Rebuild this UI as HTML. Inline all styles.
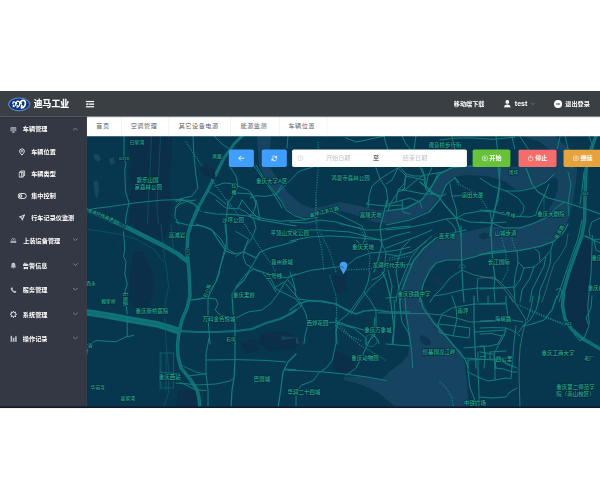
<!DOCTYPE html>
<html lang="zh-CN">
<head>
<meta charset="utf-8">
<title>迪马工业</title>
<style>
*{box-sizing:border-box;margin:0;padding:0}
html,body{width:600px;height:500px;background:#fff;overflow:hidden}
body{font-family:"Liberation Sans","Noto Sans CJK SC",sans-serif;position:relative}
#mapsvg{position:absolute;left:87px;top:136px;width:513px;height:272px;display:block}
#app{position:absolute;left:0;top:91px;width:1366px;height:722px;transform:scale(0.43924);transform-origin:0 0;overflow:hidden;color:#fff}
#header{position:absolute;left:0;top:0;width:1366px;height:58px;background:#3a3f44;z-index:5;box-shadow:0 1px 3px rgba(0,0,0,.35)}
#side{position:absolute;left:0;top:58px;width:198px;height:664px;background:#343744;z-index:4}
#tabs{position:absolute;left:198px;top:58px;width:1168px;height:45px;background:#fff;z-index:3}
#bline{position:absolute;left:0;bottom:0;width:1366px;height:4px;background:#141a2e;z-index:9}
.mi{position:absolute;left:0;width:198px;height:20px;font-size:14px;font-weight:bold;line-height:20px;color:#fff;white-space:nowrap}
.mi span{position:absolute;top:0}
.mi svg{position:absolute}
.tab{position:absolute;top:0;height:45px;line-height:45px;font-size:14px;color:#5c6066;border-right:1px solid #e2e4ea;text-align:center;letter-spacing:1.2px;text-indent:1.2px;padding-right:6.500px}
.hd{position:absolute;top:0;height:58px;line-height:58px;font-size:14px;font-weight:bold;color:#fff;white-space:nowrap}
.btn{position:absolute;top:133px;height:40px;border-radius:4px;color:#fff;font-size:14px;font-weight:bold;line-height:40px;text-align:center;white-space:nowrap}
#range{position:absolute;left:665px;top:133px;width:398px;height:40px;border-radius:4px;background:#fff;font-size:14px;line-height:40px;color:#c0c4cc}
#range span{position:absolute;top:0}
</style>
</head>
<body>
<svg id="mapsvg" viewBox="87 136 513 272" width="513" height="272" font-family="'Liberation Sans','Noto Sans CJK SC',sans-serif" font-weight="bold">
<rect x="87" y="136" width="513" height="272" fill="#07374f"/>
<path d="M257 136 L258 152 L259 166.5 L266.5 180 L275.5 193.5 L283 204 L289 211.5 L299.5 216.7 L310 217.5 L325 214.5 L342 211 L358 216 L374 222 L388 224 L400 222 L410 219 L428 211 L439 198 L446 184 L454 177 L466 175 L486 176 L498 179 L506 182 L516 190 L533 189 L547 182 L555 177 L558 181 L566 184 L568 172 L556 162 L540 166 L506 167 L470 166.4 L452 168 L440 174 L432 186 L422 200 L410 205 L398 208 L386 211 L374 210 L356 205 L340 202 L325 206 L313 208.5 L301 204 L290.5 195 L280 183 L269.5 166.5 L270 152 L271 136Z" fill="#16435f"/>
<path d="M522 136 L540 142 L550 150 L556 162 L558 181 L557.5 191 L553 202 L547 212 L537 221 L548 234 L565 230 L572 206 L575 190 L577 170 L575 155 L565 145 L555 136Z" fill="#16435f"/>
<path d="M537 221 L520 227 L487 227 L461 233 L441 237 L423 247 L411 262 L403 279 L401 299 L404 312 L408 332 L409 348 L408 356 L400 364 L389 372 L381 380 L360 376 L344 377 L344 380 L362.7 385 L378.7 393 L392 404 L397 408 L469.3 408 L468 396 L466.7 380 L465 364 L461 350 L454 346 L444 332 L434 320 L426 308 L421 296 L424 282 L430 270 L436 263 L446 260 L462 260 L474 257 L480 254.4 L500 252.4 L520 250.4 L540 246.4 L554 241 L562 234 L565 230 L548 234Z" fill="#16435f"/>
<path d="M419.3 337.5 L421.8 335 L424.3 336.25 L429.3 339.2 L431 342.5 L430.2 345.4 L426.8 345.8 L423.5 344.2 L421 341.7Z" fill="#0d3650"/>
<path d="M478 235 L484 232.5 L490 234 L489.5 238 L482 239.5Z" fill="#0d3650"/>
<path d="M428.5 276.5 L436.0 275.2 L444.8 284.0 L446.0 288.5 L439.8 289.5 L433.5 285.2Z" fill="#0d3650"/>
<path d="M127.2 136.0 L172.2 136.0 L171.5 159.0 L170.0 184.0 L171.0 206.5 L161.0 209.0 L148.5 216.5 L136.0 224.0 L129.0 224.0 L131.0 209.0 L129.8 196.5 L132.5 184.0 L128.5 171.5 L131.0 159.0 L127.2 146.5Z" fill="#0c2f49"/>
<path d="M133.5 251.5 L144.0 252.8 L153.0 274.0 L155.0 286.5 L149.0 306.5 L136.0 309.5 L128.5 299.0 L129.8 274.0 L132.0 261.5Z" fill="#0c2f49"/>
<path d="M136.0 224.0 L161.0 224.0 L166.0 239.0 L156.0 236.0 L146.0 231.5Z" fill="#0c2f49"/>
<path d="M330.5 277.0 L336.0 275.0 L340.5 276.5 L346.0 274.5 L347.5 281.5 L345.5 286.0 L349.0 291.5 L343.5 291.0 L341.0 294.5 L336.5 293.0 L335.0 286.5 L332.0 284.0Z" fill="#0d3049"/>
<path d="M178.5 390.5 L196.0 390.5 L199.0 408.0 L176.0 408.0Z" fill="#0c2f49"/>
<path d="M261.0 333.0 L286.0 331.8 L301.5 340.5 L296.0 348.5 L268.5 351.0 L258.5 343.0Z" fill="#0c2f49"/>
<path d="M281.0 336.0 L297.2 337.5 L299.8 343.0 L289.8 346.0 L282.2 341.8Z" fill="#16435f"/>
<path d="M333.5 350.5 L348.5 355.5 L356.5 368.0 L341.0 376.0 L333.0 368.0Z" fill="#0c2f49"/>
<path d="M129 196 L171 196 L170 224 L164 240 L150 238 L136 228 L130 220Z" fill="#0c2f49"/>
<path d="M583.3 238.2 L593.7 244.7 L591 272 L587.7 305.8 L589.8 324 L586 334.4 L571.6 328 L565 317.5 L563 305.8 L564.3 290.2 L569.5 272 L576 253.8 L582 238.2Z" fill="#0c2f49"/>
<path d="M93.0 154.5 L98.0 154.0 L101.0 159.0 L98.5 162.0 L94.5 160.0Z" fill="#164660"/>
<path d="M109.0 158.0 L114.0 157.5 L115.0 163.5 L110.5 164.5Z" fill="#164660"/>
<path d="M93.5 181.5 L98.0 180.5 L99.0 191.5 L97.0 199.5 L94.5 194.0Z" fill="#164660"/>
<path d="M82 208 L87 210 L104 217 L124 226 L144 236 L164 246 L178 254 L187 261" fill="none" stroke="#0f7478" stroke-width="4.2" stroke-linejoin="round" stroke-linecap="round"/>
<path d="M82 208 L87 210 L104 217 L124 226 L144 236 L164 246 L178 254 L187 261" fill="none" stroke="#0b5560" stroke-width="0.35" stroke-linejoin="round" stroke-linecap="round"/>
<path d="M82 311.7 L88 312.4 L106 315.2 L124 318.4 L142 321.8 L157 324.3 L168 327.5 L178.5 331" fill="none" stroke="#0f7478" stroke-width="6.6" stroke-linejoin="round" stroke-linecap="round"/>
<path d="M82 311.7 L88 312.4 L106 315.2 L124 318.4 L142 321.8 L157 324.3 L168 327.5 L178.5 331" fill="none" stroke="#0b5560" stroke-width="0.35" stroke-linejoin="round" stroke-linecap="round"/>
<path d="M246 132 L242 136 L234 144 L224 158 L216 174 L208 190 L198 208 L193 220" fill="none" stroke="#0f7478" stroke-width="3.0" stroke-linejoin="round" stroke-linecap="round"/>
<path d="M246 132 L242 136 L234 144 L224 158 L216 174 L208 190 L198 208 L193 220" fill="none" stroke="#0b5560" stroke-width="0.35" stroke-linejoin="round" stroke-linecap="round"/>
<path d="M198 208 L192 222 L188 234 L187 250 L188 260 L189 272 L189.6 284 L190 296 L187 308 L182 320 L179 332 L177.5 345 L178 356 L181 368 L190 379 L197 390 L199 398 L200 410" fill="none" stroke="#0f7478" stroke-width="3.4" stroke-linejoin="round" stroke-linecap="round"/>
<path d="M198 208 L192 222 L188 234 L187 250 L188 260 L189 272 L189.6 284 L190 296 L187 308 L182 320 L179 332 L177.5 345 L178 356 L181 368 L190 379 L197 390 L199 398 L200 410" fill="none" stroke="#0b5560" stroke-width="0.35" stroke-linejoin="round" stroke-linecap="round"/>
<path d="M179 331 L196 332 L216 332 L236 331 L252 329 L266 323 L280 319 L288 315 L296 310" fill="none" stroke="#0f7478" stroke-width="2.2" stroke-linejoin="round" stroke-linecap="round"/>
<path d="M179 331 L196 332 L216 332 L236 331 L252 329 L266 323 L280 319 L288 315 L296 310" fill="none" stroke="#0b5560" stroke-width="0.35" stroke-linejoin="round" stroke-linecap="round"/>
<path d="M600 120 L596 136 L590 152 L586 170 L585 195 L584.6 220 L582 235.6 L575.5 253.8 L569 272 L563.8 290.2 L562.5 305.8 L565 318.8 L571.6 329.2 L582 338.3 L597.6 347.4 L610 354" fill="none" stroke="#0f7478" stroke-width="3.4" stroke-linejoin="round" stroke-linecap="round"/>
<path d="M600 120 L596 136 L590 152 L586 170 L585 195 L584.6 220 L582 235.6 L575.5 253.8 L569 272 L563.8 290.2 L562.5 305.8 L565 318.8 L571.6 329.2 L582 338.3 L597.6 347.4 L610 354" fill="none" stroke="#0b5560" stroke-width="0.35" stroke-linejoin="round" stroke-linecap="round"/>
<path d="M124.0 136.0 L124.0 159.0 L126.0 164.0 L124.8 169.0 L125.5 191.5 L129.0 202.8 L126.0 216.5 L125.5 224.0" fill="none" stroke="#117e7e" stroke-width="1.0" stroke-linejoin="round" stroke-linecap="round"/>
<path d="M151.5 136.0 L150.0 171.5 L148.5 196.5 L147.5 224.0" fill="none" stroke="#0f686e" stroke-width="0.5" stroke-linejoin="round" stroke-linecap="round"/>
<path d="M160.5 136.0 L158.8 171.5 L157.0 206.5 L158.5 224.0" fill="none" stroke="#0f686e" stroke-width="0.5" stroke-linejoin="round" stroke-linecap="round"/>
<path d="M86.0 209.5 L111.0 206.5 L136.0 202.8 L161.0 200.2 L182.2 199.5" fill="none" stroke="#117e7e" stroke-width="1.0" stroke-linejoin="round" stroke-linecap="round"/>
<path d="M182.2 199.5 L176.0 206.5 L174.8 216.5 L178.5 224.0" fill="none" stroke="#117e7e" stroke-width="1.0" stroke-linejoin="round" stroke-linecap="round"/>
<path d="M182.2 199.5 L193.5 204.0 L201.0 211.5" fill="none" stroke="#117e7e" stroke-width="1.0" stroke-linejoin="round" stroke-linecap="round"/>
<path d="M123.5 231.5 L124.8 249.0 L123.5 256.5 L126.0 261.5 L124.8 274.0 L127.2 284.0 L123.5 296.5 L126.0 304.0 L127.2 314.0" fill="none" stroke="#117e7e" stroke-width="1.0" stroke-linejoin="round" stroke-linecap="round"/>
<path d="M161.0 224.0 L163.5 249.0 L167.2 274.0 L168.5 286.5 L166.0 299.0 L163.5 314.0" fill="none" stroke="#0f686e" stroke-width="0.5" stroke-linejoin="round" stroke-linecap="round"/>
<path d="M171.0 224.0 L172.2 239.0 L174.0 251.5" fill="none" stroke="#0f686e" stroke-width="0.5" stroke-linejoin="round" stroke-linecap="round"/>
<path d="M86.0 229.0 L118.5 234.0 L136.0 239.0 L153.5 249.0 L163.5 261.5" fill="none" stroke="#0f686e" stroke-width="0.5" stroke-linejoin="round" stroke-linecap="round"/>
<path d="M196.0 224.0 L211.0 229.0 L221.0 239.0 L226.0 249.0 L221.0 264.0 L216.0 281.5 L208.5 296.5 L193.5 300.2" fill="none" stroke="#117e7e" stroke-width="1.0" stroke-linejoin="round" stroke-linecap="round"/>
<path d="M226.0 224.0 L227.2 249.0 L236.0 254.0" fill="none" stroke="#117e7e" stroke-width="1.0" stroke-linejoin="round" stroke-linecap="round"/>
<path d="M268.5 274.0 L276.0 289.0 L296.0 299.0 L301.0 306.5 L291.0 314.0" fill="none" stroke="#117e7e" stroke-width="1.0" stroke-linejoin="round" stroke-linecap="round"/>
<path d="M286.0 284.0 L298.5 299.0 L318.5 301.5 L336.0 304.0 L356.0 314.0" fill="none" stroke="#117e7e" stroke-width="1.0" stroke-linejoin="round" stroke-linecap="round"/>
<path d="M386.0 274.0 L371.0 286.5 L361.0 299.0 L351.0 314.0" fill="none" stroke="#117e7e" stroke-width="1.0" stroke-linejoin="round" stroke-linecap="round"/>
<path d="M236.0 231.5 L248.5 239.0 L243.5 251.5 L236.0 256.5" fill="none" stroke="#117e7e" stroke-width="1.0" stroke-linejoin="round" stroke-linecap="round"/>
<path d="M164.8 318.0 L166.0 343.0 L168.5 368.0 L168.5 393.0 L163.5 408.0" fill="none" stroke="#0f686e" stroke-width="0.5" stroke-linejoin="round" stroke-linecap="round"/>
<path d="M161.0 353.0 L173.5 353.0 L173.5 388.0 L161.0 388.0 L161.0 353.0" fill="none" stroke="#117e7e" stroke-width="0.5" stroke-linejoin="round" stroke-linecap="round"/>
<path d="M86.0 358.0 L88.5 345.5 L96.0 340.5 L116.0 341.8 L126.0 336.8 L133.5 335.5" fill="none" stroke="#117e7e" stroke-width="1.0" stroke-linejoin="round" stroke-linecap="round"/>
<path d="M127.2 318.0 L127.2 335.5" fill="none" stroke="#117e7e" stroke-width="1.0" stroke-linejoin="round" stroke-linecap="round"/>
<path d="M336.0 318.0 L336.0 343.0 L332.2 360.5 L326.0 368.0 L318.5 373.0 L313.5 380.5 L301.0 385.5 L296.0 393.0 L296.0 408.0" fill="none" stroke="#117e7e" stroke-width="1.0" stroke-linejoin="round" stroke-linecap="round"/>
<path d="M284.8 370.0 L321.0 371.8 L346.0 374.2 L366.0 376.8 L386.0 380.5" fill="none" stroke="#117e7e" stroke-width="1.0" stroke-linejoin="round" stroke-linecap="round"/>
<path d="M336.0 323.0 L353.5 328.0 L366.0 338.0 L366.0 345.5" fill="none" stroke="#117e7e" stroke-width="1.0" stroke-linejoin="round" stroke-linecap="round"/>
<path d="M374.8 318.0 L373.5 333.0 L366.0 348.0 L356.0 368.0 L346.0 375.5" fill="none" stroke="#117e7e" stroke-width="1.0" stroke-linejoin="round" stroke-linecap="round"/>
<path d="M336.0 325.5 L361.0 345.5 L386.0 360.5" fill="none" stroke="#12868a" stroke-width="1.3" stroke-linejoin="round" stroke-linecap="round" stroke-dasharray="0.01 2.5"/>
<circle cx="371.0" cy="340.5" r="6" fill="none" stroke="#117e7e" stroke-width="0.7"/>
<path d="M386.0 211.0 L406.0 208.4 L422.0 199.6 L432.0 185.6 L440.0 173.6 L452.0 167.6 L470.0 166.0 L506.0 166.4" fill="none" stroke="#117e7e" stroke-width="1.2" stroke-linejoin="round" stroke-linecap="round"/>
<path d="M386.0 225.0 L410.0 220.0 L429.0 212.0 L440.0 199.0 L446.0 185.0 L455.0 177.6 L459.0 183.0" fill="none" stroke="#117e7e" stroke-width="1.2" stroke-linejoin="round" stroke-linecap="round"/>
<path d="M420.0 182.0 L432.0 192.0 L439.0 197.0 L444.0 204.0 L456.0 218.0 L460.0 230.0 L461.0 236.0" fill="none" stroke="#117e7e" stroke-width="1.2" stroke-linejoin="round" stroke-linecap="round"/>
<path d="M398.0 168.0 L406.0 176.0 L404.0 190.0 L398.0 192.0 L390.0 204.0 L388.0 211.0" fill="none" stroke="#117e7e" stroke-width="1.0" stroke-linejoin="round" stroke-linecap="round"/>
<path d="M404.0 190.0 L424.0 194.0 L435.0 194.0" fill="none" stroke="#117e7e" stroke-width="1.0" stroke-linejoin="round" stroke-linecap="round"/>
<path d="M406.0 176.0 L424.0 180.0 L426.0 190.0 L435.0 194.0" fill="none" stroke="#117e7e" stroke-width="1.0" stroke-linejoin="round" stroke-linecap="round"/>
<path d="M422.0 168.0 L426.0 180.0" fill="none" stroke="#117e7e" stroke-width="1.0" stroke-linejoin="round" stroke-linecap="round"/>
<path d="M386.0 184.0 L392.0 180.0 L398.0 168.0" fill="none" stroke="#117e7e" stroke-width="1.0" stroke-linejoin="round" stroke-linecap="round"/>
<path d="M450.0 184.0 L452.0 196.0 L456.0 208.0 L457.0 218.0 L464.0 214.0 L480.0 211.0 L494.0 212.0 L506.0 215.0" fill="none" stroke="#117e7e" stroke-width="1.0" stroke-linejoin="round" stroke-linecap="round"/>
<path d="M452.0 196.0 L462.0 195.6" fill="none" stroke="#117e7e" stroke-width="1.0" stroke-linejoin="round" stroke-linecap="round"/>
<path d="M455.0 177.6 L458.0 184.0 L470.0 190.0 L482.0 200.0 L488.0 210.0" fill="none" stroke="#12868a" stroke-width="1.3" stroke-linejoin="round" stroke-linecap="round" stroke-dasharray="0.01 2.5"/>
<path d="M386.0 230.0 L406.0 228.0 L426.0 224.0 L446.0 219.0 L457.0 218.0" fill="none" stroke="#117e7e" stroke-width="1.0" stroke-linejoin="round" stroke-linecap="round"/>
<path d="M446.0 219.0 L452.0 224.0 L456.0 230.0 L454.0 236.0" fill="none" stroke="#117e7e" stroke-width="1.0" stroke-linejoin="round" stroke-linecap="round"/>
<path d="M457.0 218.0 L470.0 222.0 L490.0 223.0 L506.0 222.0" fill="none" stroke="#117e7e" stroke-width="1.0" stroke-linejoin="round" stroke-linecap="round"/>
<path d="M490.0 212.0 L492.0 224.0 L490.0 236.0" fill="none" stroke="#117e7e" stroke-width="1.0" stroke-linejoin="round" stroke-linecap="round"/>
<path d="M498.0 168.0 L500.0 184.0 L498.0 200.0 L494.0 212.0" fill="none" stroke="#117e7e" stroke-width="1.0" stroke-linejoin="round" stroke-linecap="round"/>
<path d="M500.0 168.0 L499.0 188.0 L496.0 204.0 L492.0 222.0 L490.0 236.0" fill="none" stroke="#117e7e" stroke-width="1.2" stroke-linejoin="round" stroke-linecap="round"/>
<path d="M480.0 178.0 L492.0 186.0 L506.0 191.0 L520.0 191.0 L534.0 188.0 L546.0 182.0 L554.0 174.0" fill="none" stroke="#117e7e" stroke-width="1.0" stroke-linejoin="round" stroke-linecap="round"/>
<path d="M506.0 191.0 L518.0 198.0 L524.0 206.0 L523.0 212.0 L520.0 216.0" fill="none" stroke="#117e7e" stroke-width="1.0" stroke-linejoin="round" stroke-linecap="round"/>
<path d="M526.0 168.0 L532.0 184.0 L538.0 192.0 L548.0 198.0 L564.0 202.0 L580.0 207.0 L592.0 211.0 L600.0 214.0" fill="none" stroke="#117e7e" stroke-width="1.2" stroke-linejoin="round" stroke-linecap="round"/>
<path d="M549.0 184.0 L544.0 196.0 L538.0 208.0 L536.0 214.0" fill="none" stroke="#117e7e" stroke-width="1.0" stroke-linejoin="round" stroke-linecap="round"/>
<path d="M480.0 210.0 L494.0 211.0 L510.0 216.0 L530.0 217.0 L536.0 215.0" fill="none" stroke="#117e7e" stroke-width="1.0" stroke-linejoin="round" stroke-linecap="round"/>
<path d="M544.0 198.0 L544.0 214.0" fill="none" stroke="#12868a" stroke-width="1.3" stroke-linejoin="round" stroke-linecap="round" stroke-dasharray="0.01 2.5"/>
<path d="M480.0 222.0 L492.0 223.0 L504.0 228.0 L520.0 228.0 L532.0 224.0 L546.0 218.0 L556.0 208.0 L564.0 202.0" fill="none" stroke="#117e7e" stroke-width="1.0" stroke-linejoin="round" stroke-linecap="round"/>
<path d="M584.0 172.0 L582.0 190.0 L580.0 204.0" fill="none" stroke="#117e7e" stroke-width="1.0" stroke-linejoin="round" stroke-linecap="round"/>
<path d="M568.0 172.0 L571.0 184.0 L568.0 204.0 L569.0 216.0" fill="none" stroke="#117e7e" stroke-width="1.0" stroke-linejoin="round" stroke-linecap="round"/>
<path d="M600.0 218.0 L592.0 222.0 L589.0 230.0 L590.0 236.0" fill="none" stroke="#117e7e" stroke-width="1.0" stroke-linejoin="round" stroke-linecap="round"/>
<path d="M461.0 226.0 L461.0 230.0 L461.6 260.0 L462.0 270.0 L463.0 290.0 L464.0 302.0" fill="none" stroke="#117e7e" stroke-width="1.2" stroke-linejoin="round" stroke-linecap="round"/>
<ellipse cx="462.2" cy="266.4" rx="3.4" ry="1.8" fill="none" stroke="#117e7e" stroke-width="0.6"/>
<path d="M491.0 226.0 L491.0 230.0 L492.0 252.0 L494.0 270.0 L495.0 278.0" fill="none" stroke="#117e7e" stroke-width="1.2" stroke-linejoin="round" stroke-linecap="round"/>
<path d="M462.0 270.0 L474.0 275.0 L490.0 278.0 L498.0 280.0 L506.0 288.0 L514.0 298.0" fill="none" stroke="#3d7f78" stroke-width="0.7" stroke-linejoin="round" stroke-linecap="round"/>
<path d="M506.0 250.0 L490.0 252.0 L474.0 257.0 L462.0 260.0 L446.0 260.0 L436.0 263.0 L430.0 270.0 L424.0 282.0 L420.0 296.0 L420.0 302.0" fill="none" stroke="#117e7e" stroke-width="1.2" stroke-linejoin="round" stroke-linecap="round"/>
<path d="M466.0 230.0 L452.0 233.0 L436.0 238.0 L424.0 248.0 L414.0 260.0 L408.0 274.0 L402.0 290.0 L400.0 302.0" fill="none" stroke="#117e7e" stroke-width="1.2" stroke-linejoin="round" stroke-linecap="round"/>
<path d="M432.0 236.0 L420.0 246.0 L411.0 258.0 L405.0 272.0 L398.0 290.0 L396.0 302.0" fill="none" stroke="#117e7e" stroke-width="1.0" stroke-linejoin="round" stroke-linecap="round"/>
<path d="M386.0 248.0 L402.0 242.0 L418.0 236.0 L432.0 230.0" fill="none" stroke="#117e7e" stroke-width="1.0" stroke-linejoin="round" stroke-linecap="round"/>
<path d="M386.0 254.0 L398.0 256.0 L412.0 252.0 L426.0 242.0" fill="none" stroke="#117e7e" stroke-width="1.0" stroke-linejoin="round" stroke-linecap="round"/>
<path d="M386.0 266.0 L398.0 265.0 L412.0 264.0" fill="none" stroke="#117e7e" stroke-width="1.0" stroke-linejoin="round" stroke-linecap="round"/>
<path d="M390.0 258.0 L412.0 252.0" fill="none" stroke="#12868a" stroke-width="1.3" stroke-linejoin="round" stroke-linecap="round" stroke-dasharray="0.01 2.5"/>
<path d="M462.0 270.0 L450.0 278.0 L442.0 288.0 L434.0 296.0 L430.0 302.0" fill="none" stroke="#117e7e" stroke-width="1.0" stroke-linejoin="round" stroke-linecap="round"/>
<path d="M434.0 296.0 L446.0 294.0 L462.0 290.0 L478.0 288.0 L506.0 288.0" fill="none" stroke="#117e7e" stroke-width="1.0" stroke-linejoin="round" stroke-linecap="round"/>
<path d="M478.0 278.0 L477.0 288.0 L478.0 302.0" fill="none" stroke="#117e7e" stroke-width="1.0" stroke-linejoin="round" stroke-linecap="round"/>
<path d="M495.0 278.0 L494.0 288.0 L495.0 302.0" fill="none" stroke="#117e7e" stroke-width="1.0" stroke-linejoin="round" stroke-linecap="round"/>
<path d="M388.0 270.0 L392.0 286.0 L390.0 302.0" fill="none" stroke="#117e7e" stroke-width="1.0" stroke-linejoin="round" stroke-linecap="round"/>
<path d="M480.0 254.4 L500.0 252.4 L520.0 250.4 L540.0 246.4 L554.0 241.4 L562.0 234.4 L565.0 230.0 L568.0 224.0" fill="none" stroke="#117e7e" stroke-width="1.2" stroke-linejoin="round" stroke-linecap="round"/>
<path d="M480.0 278.0 L494.0 277.0 L500.0 284.0 L508.0 294.0 L513.0 302.0" fill="none" stroke="#3d7f78" stroke-width="0.7" stroke-linejoin="round" stroke-linecap="round"/>
<path d="M517.0 251.0 L518.0 262.0 L515.0 276.0 L514.0 288.0 L515.0 302.0" fill="none" stroke="#117e7e" stroke-width="1.0" stroke-linejoin="round" stroke-linecap="round"/>
<path d="M518.0 262.0 L524.0 268.0 L534.0 267.0 L540.0 262.0 L539.0 252.0 L535.0 249.0" fill="none" stroke="#117e7e" stroke-width="1.0" stroke-linejoin="round" stroke-linecap="round"/>
<path d="M540.0 262.0 L546.0 256.0 L551.0 250.0 L553.0 242.0" fill="none" stroke="#117e7e" stroke-width="1.0" stroke-linejoin="round" stroke-linecap="round"/>
<path d="M546.0 256.0 L544.0 266.0 L538.0 278.0 L532.0 290.0 L530.0 302.0" fill="none" stroke="#117e7e" stroke-width="1.0" stroke-linejoin="round" stroke-linecap="round"/>
<path d="M551.0 252.0 L550.0 264.0 L546.0 276.0 L540.0 290.0 L538.0 302.0" fill="none" stroke="#117e7e" stroke-width="1.0" stroke-linejoin="round" stroke-linecap="round"/>
<path d="M568.0 234.0 L566.0 246.0 L560.0 256.0 L554.0 264.0 L550.0 276.0 L546.0 290.0 L542.0 302.0" fill="none" stroke="#3d7f78" stroke-width="0.6" stroke-linejoin="round" stroke-linecap="round"/>
<path d="M480.0 289.0 L500.0 288.0 L514.0 287.0" fill="none" stroke="#117e7e" stroke-width="1.0" stroke-linejoin="round" stroke-linecap="round"/>
<path d="M524.0 268.0 L520.0 280.0 L514.0 288.0" fill="none" stroke="#117e7e" stroke-width="1.0" stroke-linejoin="round" stroke-linecap="round"/>
<path d="M534.0 267.0 L530.0 278.0 L522.0 290.0 L520.0 302.0" fill="none" stroke="#117e7e" stroke-width="1.0" stroke-linejoin="round" stroke-linecap="round"/>
<path d="M502.0 238.0 L506.0 254.0 L508.0 270.0 L502.0 282.0" fill="none" stroke="#12868a" stroke-width="1.3" stroke-linejoin="round" stroke-linecap="round" stroke-dasharray="0.01 2.5"/>
<path d="M512.0 238.0 L516.0 252.0" fill="none" stroke="#12868a" stroke-width="1.3" stroke-linejoin="round" stroke-linecap="round" stroke-dasharray="0.01 2.5"/>
<path d="M586.0 236.0 L594.0 240.0 L600.0 239.0" fill="none" stroke="#117e7e" stroke-width="1.0" stroke-linejoin="round" stroke-linecap="round"/>
<path d="M594.0 240.0 L596.0 250.0 L600.0 252.0" fill="none" stroke="#117e7e" stroke-width="1.0" stroke-linejoin="round" stroke-linecap="round"/>
<path d="M556.0 290.0 L560.0 288.0 L562.0 292.0 L559.0 302.0" fill="none" stroke="#117e7e" stroke-width="1.0" stroke-linejoin="round" stroke-linecap="round"/>
<path d="M378.0 312.8 L386.0 313.0 L406.0 313.6 L426.0 313.6 L442.0 315.0 L456.0 318.0 L470.0 322.0 L486.0 321.6 L506.0 320.0" fill="none" stroke="#2f8078" stroke-width="0.8" stroke-linejoin="round" stroke-linecap="round"/>
<path d="M405.0 296.0 L406.0 312.0 L409.0 332.0 L411.6 350.0 L412.6 368.0" fill="none" stroke="#117e7e" stroke-width="1.0" stroke-linejoin="round" stroke-linecap="round"/>
<path d="M394.0 300.0 L395.0 313.0 L394.0 328.0 L392.0 344.0" fill="none" stroke="#117e7e" stroke-width="1.0" stroke-linejoin="round" stroke-linecap="round"/>
<path d="M400.0 302.0 L401.0 313.0" fill="none" stroke="#117e7e" stroke-width="1.0" stroke-linejoin="round" stroke-linecap="round"/>
<path d="M386.0 344.0 L398.0 345.0 L410.0 346.0" fill="none" stroke="#117e7e" stroke-width="1.0" stroke-linejoin="round" stroke-linecap="round"/>
<path d="M420.0 296.0 L423.0 308.0 L433.0 322.0 L444.0 334.0 L455.0 347.0 L465.0 359.0 L468.4 368.0" fill="none" stroke="#117e7e" stroke-width="1.2" stroke-linejoin="round" stroke-linecap="round"/>
<path d="M452.0 296.0 L456.0 308.0 L457.0 318.0 L455.0 328.0 L453.0 336.0" fill="none" stroke="#117e7e" stroke-width="1.0" stroke-linejoin="round" stroke-linecap="round"/>
<path d="M438.0 324.0 L442.0 314.0 L452.0 308.0 L474.0 304.0 L506.0 304.0" fill="none" stroke="#117e7e" stroke-width="1.0" stroke-linejoin="round" stroke-linecap="round"/>
<path d="M474.0 296.0 L474.0 304.0 L474.0 322.0 L475.0 346.0 L476.0 368.0" fill="none" stroke="#117e7e" stroke-width="1.2" stroke-linejoin="round" stroke-linecap="round"/>
<path d="M439.0 324.0 L456.0 326.0 L470.0 328.0 L469.0 338.0 L454.0 336.0 L440.0 333.0 L438.0 324.0" fill="none" stroke="#117e7e" stroke-width="1.0" stroke-linejoin="round" stroke-linecap="round"/>
<path d="M488.0 296.0 L488.0 304.0" fill="none" stroke="#117e7e" stroke-width="1.0" stroke-linejoin="round" stroke-linecap="round"/>
<path d="M475.0 332.0 L490.0 331.0 L506.0 330.0" fill="none" stroke="#117e7e" stroke-width="1.0" stroke-linejoin="round" stroke-linecap="round"/>
<path d="M464.0 348.0 L476.0 347.0 L490.0 346.0 L498.0 344.0 L502.0 336.0 L506.0 332.0" fill="none" stroke="#117e7e" stroke-width="1.0" stroke-linejoin="round" stroke-linecap="round"/>
<path d="M484.0 346.0 L485.0 358.0 L484.0 368.0" fill="none" stroke="#117e7e" stroke-width="1.0" stroke-linejoin="round" stroke-linecap="round"/>
<path d="M490.0 352.0 L506.0 351.0" fill="none" stroke="#117e7e" stroke-width="1.0" stroke-linejoin="round" stroke-linecap="round"/>
<path d="M466.0 358.0 L478.0 359.0 L494.0 360.0" fill="none" stroke="#117e7e" stroke-width="1.0" stroke-linejoin="round" stroke-linecap="round"/>
<path d="M494.0 356.0 L495.0 368.0" fill="none" stroke="#117e7e" stroke-width="1.0" stroke-linejoin="round" stroke-linecap="round"/>
<path d="M386.0 298.0 L398.0 297.0 L404.0 296.0" fill="none" stroke="#117e7e" stroke-width="1.0" stroke-linejoin="round" stroke-linecap="round"/>
<path d="M480.0 304.0 L496.0 303.6 L506.0 303.0 L508.0 316.0 L507.0 322.0" fill="none" stroke="#117e7e" stroke-width="1.0" stroke-linejoin="round" stroke-linecap="round"/>
<path d="M510.0 296.0 L520.0 310.0 L526.0 320.0 L523.0 332.0 L520.0 348.0 L519.0 368.0 L519.2 380.0 L520.0 408.0" fill="none" stroke="#2f8078" stroke-width="0.8" stroke-linejoin="round" stroke-linecap="round"/>
<path d="M480.0 321.0 L494.0 320.4 L512.0 320.0 L523.0 322.0" fill="none" stroke="#117e7e" stroke-width="1.0" stroke-linejoin="round" stroke-linecap="round"/>
<path d="M533.0 296.0 L531.0 308.0 L527.0 320.0" fill="none" stroke="#117e7e" stroke-width="1.0" stroke-linejoin="round" stroke-linecap="round"/>
<path d="M540.0 296.0 L536.0 310.0 L530.0 320.0 L523.0 326.0 L519.0 332.0" fill="none" stroke="#117e7e" stroke-width="1.0" stroke-linejoin="round" stroke-linecap="round"/>
<path d="M557.0 296.0 L552.0 310.0 L544.0 320.0 L532.0 324.0 L523.0 326.0" fill="none" stroke="#117e7e" stroke-width="1.2" stroke-linejoin="round" stroke-linecap="round"/>
<path d="M516.0 304.0 L540.0 314.0 L566.0 326.0" fill="none" stroke="#12868a" stroke-width="1.3" stroke-linejoin="round" stroke-linecap="round" stroke-dasharray="0.01 2.5"/>
<path d="M480.0 328.0 L492.0 327.6 L506.0 328.0 L516.0 332.0 L520.0 336.0" fill="none" stroke="#117e7e" stroke-width="1.0" stroke-linejoin="round" stroke-linecap="round"/>
<path d="M506.0 328.0 L504.0 336.0 L498.0 346.0 L494.0 354.0 L496.0 368.0" fill="none" stroke="#117e7e" stroke-width="1.0" stroke-linejoin="round" stroke-linecap="round"/>
<path d="M480.0 334.0 L492.0 333.6 L502.0 336.0" fill="none" stroke="#117e7e" stroke-width="1.0" stroke-linejoin="round" stroke-linecap="round"/>
<path d="M516.0 326.0 L514.0 342.0 L513.0 356.0 L512.0 368.0" fill="none" stroke="#117e7e" stroke-width="1.0" stroke-linejoin="round" stroke-linecap="round"/>
<path d="M480.0 346.0 L484.0 346.0 L485.0 356.0 L480.0 357.0" fill="none" stroke="#117e7e" stroke-width="1.0" stroke-linejoin="round" stroke-linecap="round"/>
<path d="M480.0 352.0 L492.0 354.0 L494.0 354.0" fill="none" stroke="#117e7e" stroke-width="1.0" stroke-linejoin="round" stroke-linecap="round"/>
<path d="M592.0 296.0 L591.0 308.0 L586.0 318.0 L589.0 326.0 L584.0 338.0 L580.0 341.0 L574.0 334.0" fill="none" stroke="#117e7e" stroke-width="1.0" stroke-linejoin="round" stroke-linecap="round"/>
<path d="M506.0 296.0 L506.0 303.0" fill="none" stroke="#117e7e" stroke-width="1.0" stroke-linejoin="round" stroke-linecap="round"/>
<path d="M193.0 136.0 L194.0 156.0 L196.0 176.0 L198.0 188.0 L192.0 196.0 L176.0 200.0" fill="none" stroke="#117e7e" stroke-width="1.0" stroke-linejoin="round" stroke-linecap="round"/>
<path d="M186.0 142.0 L202.0 166.0 L216.0 186.0 L228.0 202.0" fill="none" stroke="#12868a" stroke-width="1.3" stroke-linejoin="round" stroke-linecap="round" stroke-dasharray="0.01 2.5"/>
<path d="M214.0 136.0 L218.0 140.0 L222.0 144.0 L228.0 148.0" fill="none" stroke="#117e7e" stroke-width="1.0" stroke-linejoin="round" stroke-linecap="round"/>
<path d="M230.0 167.0 L236.0 176.0 L238.0 186.0 L234.0 194.0 L228.0 204.0 L230.0 208.0" fill="none" stroke="#117e7e" stroke-width="1.0" stroke-linejoin="round" stroke-linecap="round"/>
<path d="M215.0 186.0 L224.0 183.0 L236.0 184.0 L238.0 186.0" fill="none" stroke="#117e7e" stroke-width="1.0" stroke-linejoin="round" stroke-linecap="round"/>
<path d="M208.0 191.0 L216.0 196.0 L226.0 204.0" fill="none" stroke="#117e7e" stroke-width="1.0" stroke-linejoin="round" stroke-linecap="round"/>
<path d="M236.0 193.0 L252.0 194.0 L256.0 202.0 L255.0 208.0" fill="none" stroke="#117e7e" stroke-width="1.0" stroke-linejoin="round" stroke-linecap="round"/>
<path d="M238.0 186.0 L248.0 190.0 L252.0 194.0" fill="none" stroke="#117e7e" stroke-width="1.0" stroke-linejoin="round" stroke-linecap="round"/>
<path d="M176.0 201.0 L188.0 200.0 L196.0 205.0 L198.0 208.0" fill="none" stroke="#117e7e" stroke-width="1.0" stroke-linejoin="round" stroke-linecap="round"/>
<path d="M254.0 166.0 L264.0 180.0 L274.0 194.0 L282.0 208.0" fill="none" stroke="#117e7e" stroke-width="1.0" stroke-linejoin="round" stroke-linecap="round"/>
<path d="M284.0 182.0 L276.0 194.0 L274.0 196.0" fill="none" stroke="#117e7e" stroke-width="1.0" stroke-linejoin="round" stroke-linecap="round"/>
<path d="M288.0 136.0 L287.0 148.0" fill="none" stroke="#117e7e" stroke-width="1.0" stroke-linejoin="round" stroke-linecap="round"/>
<path d="M200.0 166.0 L214.0 168.0 L216.0 180.0 L204.0 176.0Z" fill="#0c2f49"/>
<path d="M176.0 208.0 L180.0 204.0 L188.0 201.0 L196.0 200.0" fill="none" stroke="#117e7e" stroke-width="1.0" stroke-linejoin="round" stroke-linecap="round"/>
<path d="M176.0 222.0 L188.0 225.0 L202.0 226.0 L212.0 230.0 L218.0 240.0 L226.0 251.0 L234.0 254.0 L244.0 252.0 L256.0 258.0 L260.0 252.0 L270.0 248.0 L282.0 245.0 L296.0 241.0" fill="none" stroke="#117e7e" stroke-width="1.2" stroke-linejoin="round" stroke-linecap="round"/>
<path d="M204.0 212.0 L216.0 214.0 L232.0 214.4 L248.0 216.0 L260.0 220.0 L272.0 222.0 L296.0 226.0" fill="none" stroke="#117e7e" stroke-width="1.2" stroke-linejoin="round" stroke-linecap="round"/>
<path d="M228.0 200.0 L227.0 212.0 L225.0 226.0 L227.0 240.0 L224.0 252.0 L221.0 264.0 L219.0 272.0" fill="none" stroke="#117e7e" stroke-width="1.0" stroke-linejoin="round" stroke-linecap="round"/>
<path d="M238.0 208.0 L246.0 212.0 L254.0 220.0 L256.0 228.0 L252.0 238.0 L246.0 246.0 L243.0 256.0 L246.0 264.0 L252.0 268.0 L260.0 272.0" fill="none" stroke="#117e7e" stroke-width="1.0" stroke-linejoin="round" stroke-linecap="round"/>
<path d="M216.0 200.0 L226.0 208.0 L238.0 209.0 L242.0 200.0" fill="none" stroke="#117e7e" stroke-width="1.0" stroke-linejoin="round" stroke-linecap="round"/>
<path d="M260.0 252.0 L252.0 266.0 L248.0 272.0" fill="none" stroke="#117e7e" stroke-width="1.0" stroke-linejoin="round" stroke-linecap="round"/>
<path d="M230.0 204.0 L246.0 226.0 L260.0 248.0 L270.0 262.0 L276.0 272.0" fill="none" stroke="#12868a" stroke-width="1.3" stroke-linejoin="round" stroke-linecap="round" stroke-dasharray="0.01 2.5"/>
<path d="M242.0 200.0 L250.0 210.0 L260.0 220.0" fill="none" stroke="#117e7e" stroke-width="1.0" stroke-linejoin="round" stroke-linecap="round"/>
<path d="M256.0 200.0 L258.0 208.0 L260.0 220.0" fill="none" stroke="#117e7e" stroke-width="1.0" stroke-linejoin="round" stroke-linecap="round"/>
<path d="M256.0 165.0 L265.0 180.0 L276.2 194.2 L282.2 202.5 L286.0 210.0 L295.0 216.0 L305.5 219.0 L317.5 217.5" fill="none" stroke="#117e7e" stroke-width="1.0" stroke-linejoin="round" stroke-linecap="round"/>
<path d="M314.5 166.5 L310.0 168.0 L299.5 171.0 L287.5 183.0 L276.2 194.2 L265.0 196.5 L256.0 195.7 L250.0 198.0" fill="none" stroke="#117e7e" stroke-width="1.0" stroke-linejoin="round" stroke-linecap="round"/>
<path d="M250.0 193.5 L254.5 199.5 L256.0 205.5 L253.0 213.0 L250.0 216.0" fill="none" stroke="#117e7e" stroke-width="1.0" stroke-linejoin="round" stroke-linecap="round"/>
<path d="M250.0 214.5 L265.0 219.0 L280.0 221.2 L295.0 220.5 L307.0 219.7" fill="none" stroke="#117e7e" stroke-width="1.0" stroke-linejoin="round" stroke-linecap="round"/>
<path d="M318.2 142.5 L318.2 168.0 L316.0 195.0 L316.0 225.0" fill="none" stroke="#12868a" stroke-width="1.3" stroke-linejoin="round" stroke-linecap="round" stroke-dasharray="0.01 2.5"/>
<path d="M316.0 200.0 L317.0 230.0 L322.0 250.0 L324.0 272.0" fill="none" stroke="#12868a" stroke-width="1.3" stroke-linejoin="round" stroke-linecap="round" stroke-dasharray="0.01 2.5"/>
<path d="M320.0 232.0 L330.0 252.0 L336.0 272.0" fill="none" stroke="#12868a" stroke-width="1.3" stroke-linejoin="round" stroke-linecap="round" stroke-dasharray="0.01 2.5"/>
<path d="M290.0 222.0 L306.0 223.0 L320.0 220.0 L336.0 222.0 L350.0 226.0 L366.0 230.0 L378.0 230.0 L390.0 228.0 L410.0 226.0" fill="none" stroke="#117e7e" stroke-width="1.0" stroke-linejoin="round" stroke-linecap="round"/>
<path d="M290.0 241.0 L310.0 237.0 L330.0 236.0 L350.0 237.0 L370.0 239.0 L384.0 240.0 L394.0 236.0 L410.0 232.0" fill="none" stroke="#117e7e" stroke-width="1.0" stroke-linejoin="round" stroke-linecap="round"/>
<path d="M332.0 211.0 L350.0 220.0 L362.0 226.0 L366.0 236.0 L362.0 246.0 L356.0 240.0" fill="none" stroke="#117e7e" stroke-width="1.0" stroke-linejoin="round" stroke-linecap="round"/>
<path d="M290.0 230.0 L320.0 230.0 L350.0 232.0 L380.0 240.0 L386.0 252.0 L384.0 272.0" fill="none" stroke="#117e7e" stroke-width="1.0" stroke-linejoin="round" stroke-linecap="round"/>
<path d="M387.0 200.0 L384.0 212.0 L380.0 228.0 L382.0 244.0 L378.0 260.0 L374.0 272.0" fill="none" stroke="#117e7e" stroke-width="1.2" stroke-linejoin="round" stroke-linecap="round"/>
<path d="M402.0 200.0 L403.0 212.0 L410.0 214.0" fill="none" stroke="#117e7e" stroke-width="1.0" stroke-linejoin="round" stroke-linecap="round"/>
<path d="M344.0 268.0 L356.0 258.0 L370.0 253.0 L384.0 252.0 L398.0 250.0 L410.0 247.0" fill="none" stroke="#117e7e" stroke-width="1.0" stroke-linejoin="round" stroke-linecap="round"/>
<path d="M340.0 224.0 L360.0 228.0 L366.0 240.0 L370.0 258.0 L369.0 272.0" fill="none" stroke="#12868a" stroke-width="1.3" stroke-linejoin="round" stroke-linecap="round" stroke-dasharray="0.01 2.5"/>
<path d="M344.0 270.0 L370.0 269.0 L390.0 260.0 L410.0 256.0" fill="none" stroke="#12868a" stroke-width="1.3" stroke-linejoin="round" stroke-linecap="round" stroke-dasharray="0.01 2.5"/>
<path d="M370.0 200.0 L366.0 204.0 L386.0 206.0 L402.0 205.0" fill="none" stroke="#117e7e" stroke-width="1.0" stroke-linejoin="round" stroke-linecap="round"/>
<path d="M410.0 240.0 L402.0 248.0 L398.0 260.0 L396.0 272.0" fill="none" stroke="#117e7e" stroke-width="1.0" stroke-linejoin="round" stroke-linecap="round"/>
<path d="M220.0 272.0 L216.0 282.0 L210.0 290.0 L208.0 298.0 L208.0 318.0 L209.0 332.0 L210.0 344.0" fill="none" stroke="#117e7e" stroke-width="1.0" stroke-linejoin="round" stroke-linecap="round"/>
<path d="M190.0 300.0 L208.0 298.0 L216.0 299.0 L218.0 304.0 L215.0 310.0 L220.0 315.0 L234.0 319.0" fill="none" stroke="#117e7e" stroke-width="1.0" stroke-linejoin="round" stroke-linecap="round"/>
<path d="M249.0 272.0 L244.0 280.0 L236.0 288.0 L232.0 294.0 L233.0 312.0 L235.0 324.0 L235.0 344.0" fill="none" stroke="#117e7e" stroke-width="1.2" stroke-linejoin="round" stroke-linecap="round"/>
<path d="M234.0 319.0 L248.0 312.0 L262.0 310.0 L270.0 304.0 L278.0 294.0 L284.0 284.0 L290.0 276.0 L296.0 274.0" fill="none" stroke="#117e7e" stroke-width="1.0" stroke-linejoin="round" stroke-linecap="round"/>
<path d="M262.0 272.0 L270.0 282.0 L276.0 292.0" fill="none" stroke="#117e7e" stroke-width="1.0" stroke-linejoin="round" stroke-linecap="round"/>
<path d="M274.0 288.0 L284.0 282.0" fill="none" stroke="#117e7e" stroke-width="1.0" stroke-linejoin="round" stroke-linecap="round"/>
<path d="M288.0 280.0 L296.0 290.0" fill="none" stroke="#117e7e" stroke-width="1.0" stroke-linejoin="round" stroke-linecap="round"/>
<path d="M290.0 310.0 L298.0 304.0 L308.0 301.0 L322.0 301.0 L336.0 304.0 L348.0 311.0 L356.0 314.0 L364.0 311.0 L376.0 310.0 L390.0 312.0 L410.0 312.0" fill="none" stroke="#0f7478" stroke-width="1.5" stroke-linejoin="round" stroke-linecap="round"/>
<path d="M370.0 272.0 L368.0 282.0 L364.0 292.0 L354.0 306.0 L348.0 314.0 L338.0 322.0 L336.0 332.0 L337.0 344.0" fill="none" stroke="#117e7e" stroke-width="1.0" stroke-linejoin="round" stroke-linecap="round"/>
<path d="M364.0 292.0 L370.0 300.0 L376.0 310.0 L376.0 330.0 L374.0 336.0 L366.0 344.0" fill="none" stroke="#117e7e" stroke-width="1.0" stroke-linejoin="round" stroke-linecap="round"/>
<path d="M290.0 272.0 L294.0 284.0 L296.0 296.0 L300.0 302.0 L306.0 314.0 L308.0 324.0 L305.0 336.0 L304.0 344.0" fill="none" stroke="#117e7e" stroke-width="1.0" stroke-linejoin="round" stroke-linecap="round"/>
<path d="M308.0 324.0 L322.0 323.0 L338.0 322.0 L350.0 326.0 L364.0 330.0 L376.0 330.0" fill="none" stroke="#117e7e" stroke-width="1.0" stroke-linejoin="round" stroke-linecap="round"/>
<path d="M330.0 276.0 L336.0 296.0 L337.0 322.0 L350.0 336.0 L362.0 341.0" fill="none" stroke="#12868a" stroke-width="1.3" stroke-linejoin="round" stroke-linecap="round" stroke-dasharray="0.01 2.5"/>
<path d="M382.0 272.0 L386.0 280.0 L390.0 296.0 L392.0 312.0 L394.0 328.0 L393.0 344.0" fill="none" stroke="#117e7e" stroke-width="1.2" stroke-linejoin="round" stroke-linecap="round"/>
<path d="M396.0 272.0 L399.0 288.0 L400.0 308.0 L402.0 322.0 L408.0 332.0 L410.0 338.0" fill="none" stroke="#117e7e" stroke-width="1.0" stroke-linejoin="round" stroke-linecap="round"/>
<path d="M372.0 280.0 L380.0 276.0 L384.0 272.0" fill="none" stroke="#117e7e" stroke-width="1.0" stroke-linejoin="round" stroke-linecap="round"/>
<path d="M374.0 336.0 L378.0 340.0 L379.0 344.0" fill="none" stroke="#117e7e" stroke-width="1.0" stroke-linejoin="round" stroke-linecap="round"/>
<path d="M209.0 338.0 L206.0 354.0 L206.0 374.0 L208.0 390.0 L208.0 408.0" fill="none" stroke="#117e7e" stroke-width="1.0" stroke-linejoin="round" stroke-linecap="round"/>
<path d="M206.0 360.0 L236.0 359.6 L266.0 360.4 L286.0 362.0" fill="none" stroke="#117e7e" stroke-width="1.0" stroke-linejoin="round" stroke-linecap="round"/>
<path d="M235.0 342.0 L235.0 360.0 L234.0 378.0 L232.0 390.0 L231.0 408.0" fill="none" stroke="#117e7e" stroke-width="1.2" stroke-linejoin="round" stroke-linecap="round"/>
<path d="M180.0 383.0 L196.0 385.0 L216.0 384.0 L230.0 381.0 L234.0 378.0" fill="none" stroke="#117e7e" stroke-width="1.0" stroke-linejoin="round" stroke-linecap="round"/>
<path d="M296.0 354.0 L288.0 362.0 L283.0 372.0 L281.0 388.0 L278.0 408.0" fill="none" stroke="#117e7e" stroke-width="1.2" stroke-linejoin="round" stroke-linecap="round"/>
<path d="M285.0 369.0 L296.0 370.0" fill="none" stroke="#117e7e" stroke-width="1.0" stroke-linejoin="round" stroke-linecap="round"/>
<path d="M188.0 376.0 L204.0 374.0 L206.0 374.0" fill="none" stroke="#117e7e" stroke-width="1.0" stroke-linejoin="round" stroke-linecap="round"/>
<path d="M176.0 383.0 L184.0 384.0 L196.0 390.0 L206.0 390.4" fill="none" stroke="#117e7e" stroke-width="1.0" stroke-linejoin="round" stroke-linecap="round"/>
<path d="M240.0 342.0 L256.0 340.0 L260.0 350.0 L246.0 354.0Z" fill="#0c2f49"/>
<path d="M256.0 344.0 L296.0 338.0 L296.0 348.0 L272.0 350.0Z" fill="#0c2f49"/>
<text x="137" y="144.2" font-size="4.8" fill="#1e9a88" text-anchor="middle" stroke="#062435" stroke-width="1.1" paint-order="stroke" stroke-linejoin="round">白家湾</text>
<text x="147.5" y="182.0" font-size="5.5" fill="#1e9a88" text-anchor="middle" stroke="#062435" stroke-width="1.1" paint-order="stroke" stroke-linejoin="round">歌乐山国</text>
<text x="148.3" y="189.2" font-size="5.5" fill="#1e9a88" text-anchor="middle" stroke="#062435" stroke-width="1.1" paint-order="stroke" stroke-linejoin="round">家森林公园</text>
<text x="217" y="157.6" font-size="4.8" fill="#1e9a88" text-anchor="middle" stroke="#062435" stroke-width="1.1" paint-order="stroke" stroke-linejoin="round">凤凰</text>
<text x="234" y="187.0" font-size="4.8" fill="#1e9a88" text-anchor="middle" stroke="#062435" stroke-width="1.1" paint-order="stroke" stroke-linejoin="round">红</text>
<text x="234" y="194.0" font-size="4.8" fill="#1e9a88" text-anchor="middle" stroke="#062435" stroke-width="1.1" paint-order="stroke" stroke-linejoin="round">槽</text>
<text x="271.7" y="182.7" font-size="5.5" fill="#1e9a88" text-anchor="middle" stroke="#062435" stroke-width="1.1" paint-order="stroke" stroke-linejoin="round">重庆大学A区</text>
<text x="350.5" y="179.6" font-size="5.5" fill="#1e9a88" text-anchor="middle" stroke="#062435" stroke-width="1.1" paint-order="stroke" stroke-linejoin="round">鸿恩寺森林公园</text>
<text x="370.7" y="216.5" font-size="5.5" fill="#1e9a88" text-anchor="middle" stroke="#062435" stroke-width="1.1" paint-order="stroke" stroke-linejoin="round">嘉陵天地</text>
<text x="233" y="221.6" font-size="5.5" fill="#1e9a88" text-anchor="middle" stroke="#062435" stroke-width="1.1" paint-order="stroke" stroke-linejoin="round">沙坪公园</text>
<text x="289.8" y="235.0" font-size="5.5" fill="#1e9a88" text-anchor="middle" stroke="#062435" stroke-width="1.1" paint-order="stroke" stroke-linejoin="round">平顶山文化公园</text>
<text x="363" y="249.0" font-size="5.5" fill="#1e9a88" text-anchor="middle" stroke="#062435" stroke-width="1.1" paint-order="stroke" stroke-linejoin="round">重庆天地</text>
<text x="282" y="264.0" font-size="5.5" fill="#1e9a88" text-anchor="middle" stroke="#062435" stroke-width="1.1" paint-order="stroke" stroke-linejoin="round">嘉州新城</text>
<text x="389" y="266.59999999999997" font-size="5.5" fill="#1e9a88" text-anchor="middle" stroke="#062435" stroke-width="1.1" paint-order="stroke" stroke-linejoin="round">龙湖时代天街</text>
<text x="274" y="278.0" font-size="5.5" fill="#1e9a88" text-anchor="middle" stroke="#062435" stroke-width="1.1" paint-order="stroke" stroke-linejoin="round">二号线</text>
<text x="177" y="236.6" font-size="5.5" fill="#1e9a88" text-anchor="middle" stroke="#062435" stroke-width="1.1" paint-order="stroke" stroke-linejoin="round">高滩岩</text>
<text x="91" y="284.5" font-size="4.8" fill="#1e9a88" text-anchor="middle" stroke="#062435" stroke-width="1.1" paint-order="stroke" stroke-linejoin="round">西永</text>
<text x="108.5" y="302.5" font-size="4.8" fill="#1e9a88" text-anchor="middle" stroke="#062435" stroke-width="1.1" paint-order="stroke" stroke-linejoin="round">赖家桥</text>
<text x="152" y="313.0" font-size="5.5" fill="#1e9a88" text-anchor="middle" stroke="#062435" stroke-width="1.1" paint-order="stroke" stroke-linejoin="round">重庆新桥医院</text>
<text x="219" y="320.59999999999997" font-size="5.5" fill="#1e9a88" text-anchor="middle" stroke="#062435" stroke-width="1.1" paint-order="stroke" stroke-linejoin="round">万科金色悦城</text>
<text x="244" y="297.4" font-size="5.5" fill="#1e9a88" text-anchor="middle" stroke="#062435" stroke-width="1.1" paint-order="stroke" stroke-linejoin="round">重庆果岭</text>
<text x="317.4" y="325.0" font-size="5.5" fill="#1e9a88" text-anchor="middle" stroke="#062435" stroke-width="1.1" paint-order="stroke" stroke-linejoin="round">西郊花园</text>
<text x="378" y="332.3" font-size="5.5" fill="#1e9a88" text-anchor="middle" stroke="#062435" stroke-width="1.1" paint-order="stroke" stroke-linejoin="round">重庆万象城</text>
<text x="365" y="360.3" font-size="5.5" fill="#1e9a88" text-anchor="middle" stroke="#062435" stroke-width="1.1" paint-order="stroke" stroke-linejoin="round">重庆动物园</text>
<text x="414" y="296.3" font-size="5.5" fill="#1e9a88" text-anchor="middle" stroke="#062435" stroke-width="1.1" paint-order="stroke" stroke-linejoin="round">重庆铁路中学</text>
<text x="447" y="237.5" font-size="5.5" fill="#1e9a88" text-anchor="middle" stroke="#062435" stroke-width="1.1" paint-order="stroke" stroke-linejoin="round">鑫天地</text>
<text x="505.6" y="234.6" font-size="5.5" fill="#1e9a88" text-anchor="middle" stroke="#062435" stroke-width="1.1" paint-order="stroke" stroke-linejoin="round">山城步道</text>
<text x="498.8" y="264.3" font-size="5.5" fill="#1e9a88" text-anchor="middle" stroke="#062435" stroke-width="1.1" paint-order="stroke" stroke-linejoin="round">长江国际</text>
<text x="463" y="313.0" font-size="5.5" fill="#1e9a88" text-anchor="middle" stroke="#062435" stroke-width="1.1" paint-order="stroke" stroke-linejoin="round">南坪</text>
<text x="503" y="320.59999999999997" font-size="5.5" fill="#1e9a88" text-anchor="middle" stroke="#062435" stroke-width="1.1" paint-order="stroke" stroke-linejoin="round">海峡路</text>
<text x="439" y="354.0" font-size="5.5" fill="#1e9a88" text-anchor="middle" stroke="#062435" stroke-width="1.1" paint-order="stroke" stroke-linejoin="round">恒基翔龙江畔</text>
<text x="504" y="360.59999999999997" font-size="5.5" fill="#1e9a88" text-anchor="middle" stroke="#062435" stroke-width="1.1" paint-order="stroke" stroke-linejoin="round">四公里</text>
<text x="558" y="355.0" font-size="5.5" fill="#1e9a88" text-anchor="middle" stroke="#062435" stroke-width="1.1" paint-order="stroke" stroke-linejoin="round">重庆工商大学</text>
<text x="589" y="360.0" font-size="4.8" fill="#1e9a88" text-anchor="middle" stroke="#062435" stroke-width="1.1" paint-order="stroke" stroke-linejoin="round">老厂</text>
<text x="575.5" y="389.0" font-size="5.5" fill="#1e9a88" text-anchor="middle" stroke="#062435" stroke-width="1.1" paint-order="stroke" stroke-linejoin="round">重庆第二师范学</text>
<text x="575.5" y="396.0" font-size="5.5" fill="#1e9a88" text-anchor="middle" stroke="#062435" stroke-width="1.1" paint-order="stroke" stroke-linejoin="round">院（南山校区）</text>
<text x="475" y="405.0" font-size="5.5" fill="#1e9a88" text-anchor="middle" stroke="#062435" stroke-width="1.1" paint-order="stroke" stroke-linejoin="round">中铁广场</text>
<text x="262" y="381.0" font-size="5.5" fill="#1e9a88" text-anchor="middle" stroke="#062435" stroke-width="1.1" paint-order="stroke" stroke-linejoin="round">巴国城</text>
<text x="304" y="393.5" font-size="5.5" fill="#1e9a88" text-anchor="middle" stroke="#062435" stroke-width="1.1" paint-order="stroke" stroke-linejoin="round">华润二十四城</text>
<text x="169.8" y="379.0" font-size="5.5" fill="#1e9a88" text-anchor="middle" stroke="#062435" stroke-width="1.1" paint-order="stroke" stroke-linejoin="round">重庆西站</text>
<text x="97.8" y="388.5" font-size="4.8" fill="#1e9a88" text-anchor="middle" stroke="#062435" stroke-width="1.1" paint-order="stroke" stroke-linejoin="round">华岩寺</text>
<text x="127.8" y="399.5" font-size="4.8" fill="#1e9a88" text-anchor="middle" stroke="#062435" stroke-width="1.1" paint-order="stroke" stroke-linejoin="round">高家湾</text>
<text x="231" y="341.4" font-size="4.8" fill="#1e9a88" text-anchor="middle" stroke="#062435" stroke-width="1.1" paint-order="stroke" stroke-linejoin="round">石坪</text>
<text x="513.5" y="173.79999999999998" font-size="4.8" fill="#1e9a88" text-anchor="middle" stroke="#062435" stroke-width="1.1" paint-order="stroke" stroke-linejoin="round">塔坪</text>
<text x="551" y="215.5" font-size="5.5" fill="#1e9a88" text-anchor="middle" stroke="#062435" stroke-width="1.1" paint-order="stroke" stroke-linejoin="round">重庆大剧院</text>
<text x="472.6" y="196.6" font-size="5.5" fill="#1e9a88" text-anchor="middle" stroke="#062435" stroke-width="1.1" paint-order="stroke" stroke-linejoin="round">渝田大厦</text>
<text x="445" y="147.0" font-size="5.5" fill="#1e9a88" text-anchor="middle" stroke="#062435" stroke-width="1.1" paint-order="stroke" stroke-linejoin="round">观音桥步行街</text>
<text x="597" y="260.0" font-size="5.5" fill="#1e9a88" text-anchor="middle" stroke="#062435" stroke-width="1.1" paint-order="stroke" stroke-linejoin="round">重庆</text>
<text x="596" y="290.0" font-size="5.5" fill="#1e9a88" text-anchor="middle" stroke="#062435" stroke-width="1.1" paint-order="stroke" stroke-linejoin="round">重庆邮</text>
<text x="88" y="347.2" font-size="4.8" fill="#1e9a88" text-anchor="middle" stroke="#062435" stroke-width="1.1" paint-order="stroke" stroke-linejoin="round">含谷</text>
<text x="123.8" y="160.3" font-size="4.2" fill="#1e9a88" text-anchor="middle" stroke="#062435" stroke-width="1.1" paint-order="stroke" stroke-linejoin="round">G319</text>
<text x="324.8" y="213.5" font-size="5.0" fill="#1e9a88" text-anchor="middle" stroke="#062435" stroke-width="1.1" paint-order="stroke" stroke-linejoin="round" transform="rotate(-15 324.8 213.5)">嘉陵江滨江路</text>
<text x="507.5" y="215.8" font-size="5.0" fill="#1e9a88" text-anchor="middle" stroke="#062435" stroke-width="1.1" paint-order="stroke" stroke-linejoin="round" transform="rotate(14 507.5 215.8)">一号线</text>
<text x="561" y="233" font-size="5.0" fill="#1e9a88" text-anchor="middle" stroke="#062435" stroke-width="1.1" paint-order="stroke" stroke-linejoin="round" transform="rotate(-62 561 233)">南滨路</text>
<text x="187" y="252.4" font-size="3.8" fill="#1e9a88" text-anchor="middle" stroke="#062435" stroke-width="1.1" paint-order="stroke" stroke-linejoin="round" transform="rotate(90 187 252.4)">G75</text>
<text x="100" y="216.5" font-size="4.6" fill="#1e9a88" text-anchor="middle" stroke="#062435" stroke-width="1.1" paint-order="stroke" stroke-linejoin="round" transform="rotate(22 100 216.5)">成渝环线高速</text>
<text x="122" y="226.2" font-size="3.8" fill="#1e9a88" text-anchor="middle" stroke="#062435" stroke-width="1.1" paint-order="stroke" stroke-linejoin="round" transform="rotate(24 122 226.2)">G93</text>
<text x="123.5" y="299" font-size="4.6" fill="#1e9a88" text-anchor="middle" stroke="#062435" stroke-width="1.1" paint-order="stroke" stroke-linejoin="round" transform="rotate(90 123.5 299)">石新路</text>
<text x="208.5" y="291.5" font-size="4.6" fill="#1e9a88" text-anchor="middle" stroke="#062435" stroke-width="1.1" paint-order="stroke" stroke-linejoin="round" transform="rotate(-70 208.5 291.5)">石小路</text>
<text x="585" y="194.5" font-size="3.8" fill="#1e9a88" text-anchor="middle" stroke="#062435" stroke-width="1.1" paint-order="stroke" stroke-linejoin="round">G65</text>
<text x="568" y="325" font-size="3.8" fill="#1e9a88" text-anchor="middle" stroke="#062435" stroke-width="1.1" paint-order="stroke" stroke-linejoin="round">G65</text>
<path d="M343.500 274.200C341.300 270 339.700 267.800 339.700 265.500a3.800 3.800 0 0 1 7.600 0c0 2.300-1.600 4.500-3.800 8.700z" fill="#4a9cf2"/>
<path d="M468.0 360.0 L468.0 372.0 L470.0 388.0 L474.0 398.0 L478.0 409.0" fill="none" stroke="#117e7e" stroke-width="1.0" stroke-linejoin="round" stroke-linecap="round"/>
<path d="M478.0 352.0 L478.0 372.0 L479.0 392.0 L479.0 409.0" fill="none" stroke="#117e7e" stroke-width="1.0" stroke-linejoin="round" stroke-linecap="round"/>
<path d="M468.0 360.0 L478.0 359.6 L496.0 359.0 L500.0 358.0" fill="none" stroke="#117e7e" stroke-width="1.0" stroke-linejoin="round" stroke-linecap="round"/>
<path d="M485.0 352.0 L485.0 359.0" fill="none" stroke="#117e7e" stroke-width="1.0" stroke-linejoin="round" stroke-linecap="round"/>
<path d="M490.0 352.0 L490.0 359.0" fill="none" stroke="#117e7e" stroke-width="1.0" stroke-linejoin="round" stroke-linecap="round"/>
<path d="M496.0 359.0 L495.0 368.0 L495.0 380.0" fill="none" stroke="#117e7e" stroke-width="1.0" stroke-linejoin="round" stroke-linecap="round"/>
<path d="M468.0 372.0 L478.0 377.0 L488.0 381.0 L495.0 380.0 L506.0 378.0 L511.0 379.0 L512.0 366.0 L506.0 364.0 L502.0 361.0" fill="none" stroke="#117e7e" stroke-width="1.0" stroke-linejoin="round" stroke-linecap="round"/>
<path d="M495.0 368.0 L504.0 369.0 L512.0 372.0 L517.0 372.0" fill="none" stroke="#117e7e" stroke-width="1.0" stroke-linejoin="round" stroke-linecap="round"/>
<path d="M500.0 358.0 L508.0 364.0 L517.0 368.0" fill="none" stroke="#117e7e" stroke-width="1.0" stroke-linejoin="round" stroke-linecap="round"/>
<path d="M479.0 397.0 L492.0 398.0 L506.0 397.0 L510.0 392.0 L517.0 388.0" fill="none" stroke="#117e7e" stroke-width="1.0" stroke-linejoin="round" stroke-linecap="round"/>
<path d="M440.0 382.0 L446.0 388.0 L452.0 398.0 L454.0 409.0" fill="none" stroke="#12868a" stroke-width="1.3" stroke-linejoin="round" stroke-linecap="round" stroke-dasharray="0.01 2.5"/>
<path d="M582.0 220.0 L578.1 238.2 L571.6 256.4 L565.1 274.6 L559.9 290.2 L557.3 298.0" fill="none" stroke="#117e7e" stroke-width="1.0" stroke-linejoin="round" stroke-linecap="round"/>
<path d="M530.0 311.0 L545.6 317.5 L569.0 325.3" fill="none" stroke="#12868a" stroke-width="1.3" stroke-linejoin="round" stroke-linecap="round" stroke-dasharray="0.01 2.5"/>
<path d="M592.4 235.6 L591.1 272.0 L587.7 305.8 L589.3 324.0" fill="none" stroke="#117e7e" stroke-width="1.0" stroke-linejoin="round" stroke-linecap="round"/>
<path d="M584.6 236.1 L599.9 242.9" fill="none" stroke="#117e7e" stroke-width="1.0" stroke-linejoin="round" stroke-linecap="round"/>
<path d="M376.0 168.0 L380.0 179.0 L372.0 186.0 L369.0 196.0 L368.0 208.0" fill="none" stroke="#117e7e" stroke-width="1.0" stroke-linejoin="round" stroke-linecap="round"/>
<path d="M380.0 179.0 L388.0 174.0 L396.0 169.0 L400.0 167.0" fill="none" stroke="#117e7e" stroke-width="1.0" stroke-linejoin="round" stroke-linecap="round"/>
<path d="M380.0 179.0 L386.0 188.0 L388.0 200.0 L386.0 208.0" fill="none" stroke="#117e7e" stroke-width="1.0" stroke-linejoin="round" stroke-linecap="round"/>
<path d="M400.0 167.0 L406.0 174.0 L404.0 184.0 L398.0 190.0 L396.0 202.0 L388.0 204.0" fill="none" stroke="#117e7e" stroke-width="1.0" stroke-linejoin="round" stroke-linecap="round"/>
<path d="M398.0 190.0 L406.0 189.0 L414.0 182.0 L422.0 176.0 L430.0 174.0 L438.0 173.0 L446.0 171.0" fill="none" stroke="#117e7e" stroke-width="1.0" stroke-linejoin="round" stroke-linecap="round"/>
<path d="M406.0 174.0 L414.0 176.0 L422.0 176.0" fill="none" stroke="#117e7e" stroke-width="1.0" stroke-linejoin="round" stroke-linecap="round"/>
<path d="M420.0 167.0 L424.0 176.0 L426.0 186.0 L432.0 194.0 L442.0 196.0 L446.0 194.0" fill="none" stroke="#117e7e" stroke-width="1.0" stroke-linejoin="round" stroke-linecap="round"/>
<path d="M432.0 167.0 L428.0 176.0 L426.0 186.0" fill="none" stroke="#117e7e" stroke-width="1.0" stroke-linejoin="round" stroke-linecap="round"/>
<path d="M396.0 202.0 L410.0 198.0 L420.0 202.0 L422.0 208.0" fill="none" stroke="#117e7e" stroke-width="1.0" stroke-linejoin="round" stroke-linecap="round"/>
<path d="M438.0 173.0 L434.0 182.0 L430.0 190.0 L432.0 194.0" fill="none" stroke="#117e7e" stroke-width="1.0" stroke-linejoin="round" stroke-linecap="round"/>
<path d="M384.0 136.0 L386.0 144.0 L388.0 149.0 L390.0 160.0" fill="none" stroke="#117e7e" stroke-width="1.0" stroke-linejoin="round" stroke-linecap="round"/>
<path d="M346.0 138.0 L356.0 142.0 L366.0 140.0 L384.0 136.0" fill="none" stroke="#117e7e" stroke-width="1.0" stroke-linejoin="round" stroke-linecap="round"/>
<path d="M402.0 136.0 L406.0 144.0 L410.0 149.0 L414.0 160.0" fill="none" stroke="#117e7e" stroke-width="1.0" stroke-linejoin="round" stroke-linecap="round"/>
<path d="M416.0 136.0 L414.0 149.0" fill="none" stroke="#117e7e" stroke-width="1.0" stroke-linejoin="round" stroke-linecap="round"/>
<path d="M472 138 L493 139.3 L515 137.2" fill="none" stroke="#117e7e" stroke-width="1.0" stroke-linejoin="round" stroke-linecap="round"/>
<path d="M496 136.7 L497.3 148.7 L499 168" fill="none" stroke="#117e7e" stroke-width="1.0" stroke-linejoin="round" stroke-linecap="round"/>
<path d="M512 136.7 L514.7 148.7" fill="none" stroke="#117e7e" stroke-width="1.0" stroke-linejoin="round" stroke-linecap="round"/>
<path d="M520 136.7 L528 148.7 L534 166" fill="none" stroke="#117e7e" stroke-width="1.0" stroke-linejoin="round" stroke-linecap="round"/>
<path d="M560 136.7 L557.3 148.7" fill="none" stroke="#117e7e" stroke-width="1.0" stroke-linejoin="round" stroke-linecap="round"/>
<path d="M565.3 136.7 L568 148.7 L572 168" fill="none" stroke="#117e7e" stroke-width="1.0" stroke-linejoin="round" stroke-linecap="round"/>
<path d="M589.3 136.7 L593.3 148.7" fill="none" stroke="#117e7e" stroke-width="1.0" stroke-linejoin="round" stroke-linecap="round"/>
<path d="M440 140 L456 138 L472 138" fill="none" stroke="#117e7e" stroke-width="1.0" stroke-linejoin="round" stroke-linecap="round"/>
<path d="M452 136.5 L455 150" fill="none" stroke="#117e7e" stroke-width="1.0" stroke-linejoin="round" stroke-linecap="round"/>
<path d="M236.0 286.5 L246.0 274.0 L253.5 269.0 L268.5 274.0 L286.0 277.8 L311.0 270.2 L341.0 266.5 L344.0 268.0" fill="none" stroke="#117e7e" stroke-width="1.0" stroke-linejoin="round" stroke-linecap="round"/>
<path d="M160 352 L160 390" fill="none" stroke="#0f686e" stroke-width="0.6" stroke-linejoin="round" stroke-linecap="round"/>
<path d="M166 352 L166 390" fill="none" stroke="#0f686e" stroke-width="0.6" stroke-linejoin="round" stroke-linecap="round"/>
<path d="M160 372 L180 374" fill="none" stroke="#117e7e" stroke-width="0.7" stroke-linejoin="round" stroke-linecap="round"/>
<path d="M183 366 L196 372 L206 374" fill="none" stroke="#117e7e" stroke-width="0.8" stroke-linejoin="round" stroke-linecap="round"/>
</svg>
<div id="app">
  <div id="header">
    <svg style="position:absolute;left:18px;top:13.500px" width="52" height="33.300" viewBox="0 0 50 32"><ellipse cx="24.700" cy="15.800" rx="24.200" ry="15.400" fill="#5b86c6"/><ellipse cx="24.700" cy="15.800" rx="21.600" ry="13" fill="#10347f"/><g fill="none" stroke="#fff" stroke-linecap="round"><path d="M11.4 15.0C10.0 13.1 10.7 10.3 13.7 10.3C17.4 10.3 17.8 15.5 16.0 18.1C14.9 20.0 13.3 20.8 11.5 20.6" stroke-width="2.34"/><circle cx="12.1" cy="18.3" r="1.6" fill="#fff" stroke="none"/><path d="M19.4 14.7C17.8 12.4 18.7 8.9 22.1 8.9C26.4 8.9 26.8 15.3 24.8 18.5C23.5 20.8 21.7 21.9 19.6 21.6" stroke-width="2.70"/><circle cx="20.3" cy="18.8" r="1.8" fill="#fff" stroke="none"/><path d="M29.1 14.4C26.9 11.4 28.1 6.9 32.9 6.9C38.9 6.9 39.5 15.2 36.7 19.3C34.9 22.3 32.3 23.7 29.4 23.3" stroke-width="3.78"/><circle cx="30.4" cy="19.7" r="2.5" fill="#fff" stroke="none"/></g></svg>
    <div class="hd" style="left:77px;font-size:20px;-webkit-text-stroke:0.45px #fff">迪马工业</div>
    <svg style="position:absolute;left:195px;top:21.600px" width="20" height="16" viewBox="0 0 20 16" fill="#fff"><rect x="0" y="0.300" width="19.500" height="3"/><rect x="6.500" y="6.400" width="13" height="3"/><path d="M0 7.900L4.800 4.600v6.600z"/><rect x="0" y="12.500" width="19.500" height="3"/></svg>
    <svg style="position:absolute;left:1147px;top:20px" width="16" height="18" viewBox="0 0 16 18" fill="#fff"><circle cx="8" cy="5" r="4.300"/><path d="M0.500 17.500c0-4.500 3-7 7.500-7s7.500 2.500 7.500 7z"/></svg>
    <svg style="position:absolute;left:1208px;top:26px" width="10" height="7" viewBox="0 0 10 7" fill="none" stroke="#8d9199" stroke-width="1.500"><path d="M1 1l4 4 4-4"/></svg>
    <svg style="position:absolute;left:1261px;top:20px" width="19" height="19" viewBox="0 0 19 19"><circle cx="9.500" cy="9.500" r="9.200" fill="#fff"/><rect x="4.500" y="8.300" width="10" height="2.400" rx="1" fill="#3a3f44"/></svg>
    <div class="hd" style="left:1033px">移动端下载</div>
    <div class="hd" style="left:1172px;font-size:16px">test</div>
    <div class="hd" style="left:1287px">退出登录</div>
  </div>
  <div id="side">
    <div class="mi" style="top:19px"><span style="left:52px">车辆管理</span><svg style="left:23px;top:3.500px" width="15" height="15" viewBox="0 0 16 16"><path fill="#bcc0c8" d="M1 1.500h14v10H1z"/><path stroke="#343744" stroke-width="1" d="M2 4.500h12M2 7h12M2 9.500h12"/><path fill="#bcc0c8" d="M6.500 11.500h3v2h-3zM4 13.500h8v1.300H4z"/></svg><svg style="left:165px;top:5.500px" width="13" height="8" viewBox="0 0 10 6"><path d="M1 5l4-4 4 4" fill="none" stroke="#9a9ea8" stroke-width="1.300"/></svg></div>
    <div class="mi" style="top:71px"><span style="left:71px">车辆位置</span><svg style="left:42px;top:1px" width="16" height="18" viewBox="0 0 16 16"><path fill="none" stroke="#fff" stroke-width="1.900" d="M8 15C4.500 11 2.500 8.500 2.500 6.200a5.500 5.500 0 0 1 11 0C13.500 8.500 11.500 11 8 15z"/><circle cx="8" cy="6.300" r="1.900" fill="none" stroke="#fff" stroke-width="1.500"/></svg></div>
    <div class="mi" style="top:121px"><span style="left:71px">车辆类型</span><svg style="left:42px;top:1px" width="16" height="18" viewBox="0 0 16 16"><path fill="none" stroke="#fff" stroke-width="1.800" d="M5 3.500V1.200h9.300v10.500H12M1.500 4h9.500v11H1.500zM7.500 4v11"/></svg></div>
    <div class="mi" style="top:171px"><span style="left:71px">集中控制</span><svg style="left:40px;top:3px" width="21" height="14" viewBox="0 0 19 12"><rect x="0.900" y="0.900" width="17.200" height="10.200" rx="5.100" fill="none" stroke="#fff" stroke-width="1.800"/><circle cx="6.200" cy="6" r="3.400" fill="#fff"/><circle cx="6.200" cy="6" r="1.500" fill="#343744"/></svg></div>
    <div class="mi" style="top:220px"><span style="left:71px">行车记录仪监测</span><svg style="left:42px;top:2px" width="16" height="16" viewBox="0 0 16 16"><path fill="#fff" stroke="#fff" stroke-width=".6" d="M15 1L1 6.800l5.600 1.800L8.600 15zM12.300 3.700L8.300 11.500 7.600 7.900 4.300 7z" fill-rule="evenodd"/></svg></div>
    <div class="mi" style="top:272px"><span style="left:53px">上装设备管理</span><svg style="left:23px;top:2px" width="15" height="16" viewBox="0 0 16 16"><path fill="none" stroke="#bcc0c8" stroke-width="1.500" d="M3 8a5 5 0 0 1 10 0"/><path fill="#bcc0c8" d="M7.200 4.500h1.600V8H7.200zM1 9h14v5.500H1z"/><path stroke="#343744" stroke-width=".9" d="M4 10.500v3M6.700 10.500v3M9.300 10.500v3M12 10.500v3"/></svg><svg style="left:165px;top:3.500px" width="13" height="8" viewBox="0 0 10 6"><path d="M1 1l4 4 4-4" fill="none" stroke="#9a9ea8" stroke-width="1.300"/></svg></div>
    <div class="mi" style="top:329px"><span style="left:52px">告警信息</span><svg style="left:23px;top:2px" width="15" height="16" viewBox="0 0 16 16"><path fill="#bcc0c8" d="M8 .8c.7 0 1.200.5 1.200 1.100 2.300.6 3.600 2.500 3.600 5v3.400l1.700 2.200v.7h-13v-.7l1.700-2.200V6.900c0-2.500 1.300-4.400 3.600-5C6.800 1.300 7.300.8 8 .8zM6.300 14h3.400c0 1-.8 1.600-1.700 1.600S6.300 15 6.300 14z"/></svg><svg style="left:165px;top:3.500px" width="13" height="8" viewBox="0 0 10 6"><path d="M1 1l4 4 4-4" fill="none" stroke="#9a9ea8" stroke-width="1.300"/></svg></div>
    <div class="mi" style="top:385px"><span style="left:52px">服务管理</span><svg style="left:23px;top:3px" width="15" height="15" viewBox="0 0 16 16"><path fill="#bcc0c8" d="M3.600 1.200c.5-.4 1.200-.3 1.600.2l1.700 2.500c.3.500.2 1.100-.2 1.500l-1 .9c.9 1.900 2.300 3.300 4.200 4.300l.9-1c.4-.4 1-.5 1.500-.2l2.500 1.600c.5.400.6 1.100.2 1.600l-.9 1.200c-.7.900-1.900 1.200-3 .8C6.500 13 3 9.500 1.500 4.900c-.4-1.100 0-2.300.9-3z"/></svg><svg style="left:165px;top:3.500px" width="13" height="8" viewBox="0 0 10 6"><path d="M1 1l4 4 4-4" fill="none" stroke="#9a9ea8" stroke-width="1.300"/></svg></div>
    <div class="mi" style="top:441px"><span style="left:52px">系统管理</span><svg style="left:22px;top:1px" width="17" height="17" viewBox="0 0 16 16"><path fill="none" stroke="#f2f3f5" stroke-width="1.600" d="M8 3.200a4.800 4.800 0 1 0 0 9.600 4.800 4.800 0 0 0 0-9.600z"/><path stroke="#f2f3f5" stroke-width="2.200" d="M8 .6v2.200M8 13.200v2.200M.6 8h2.200M13.200 8h2.200M2.800 2.800l1.500 1.500M11.700 11.700l1.500 1.500M2.800 13.200l1.500-1.500M11.700 4.300l1.500-1.500"/></svg><svg style="left:165px;top:3.500px" width="13" height="8" viewBox="0 0 10 6"><path d="M1 1l4 4 4-4" fill="none" stroke="#9a9ea8" stroke-width="1.300"/></svg></div>
    <div class="mi" style="top:496px"><span style="left:52px">操作记录</span><svg style="left:23px;top:2px" width="16" height="15" viewBox="0 0 16 15"><path fill="#bcc0c8" d="M1 1h3.600v12H1zM6.200 5.500h3.600V13H6.200zM11.400 2.500H15V13h-3.600zM0 13h16v1.600H0z"/></svg><svg style="left:165px;top:3.500px" width="13" height="8" viewBox="0 0 10 6"><path d="M1 1l4 4 4-4" fill="none" stroke="#9a9ea8" stroke-width="1.300"/></svg></div>
  </div>
  <div id="tabs">
    <div class="tab" style="left:0;width:79px">首页</div>
    <div class="tab" style="left:79px;width:108px">空调管理</div>
    <div class="tab" style="left:187px;width:141px">其它设备电源</div>
    <div class="tab" style="left:328px;width:110px">能源监测</div>
    <div class="tab" style="left:438px;width:108.500px">车辆位置</div>
  </div>
  <div class="btn" style="left:521px;width:57px;background:#409eff"><svg style="position:absolute;left:21px;top:13px" width="15" height="14" viewBox="0 0 15 14" fill="none" stroke="#fff" stroke-width="2" stroke-linecap="round" stroke-linejoin="round"><path d="M6.500 2L1.500 7l5 5M2 7h11.500"/></svg></div>
  <div class="btn" style="left:596px;width:57px;background:#409eff"><svg style="position:absolute;left:21px;top:12.500px" width="15" height="15" viewBox="0 0 16 16" fill="none" stroke="#fff" stroke-width="2" stroke-linecap="round"><path d="M13.500 6.500A5.800 5.800 0 0 0 3.200 4.500M2.500 9.500a5.800 5.800 0 0 0 10.300 2"/><path d="M13.800 2.500v4h-4M2.200 13.500v-4h4" stroke-linejoin="round"/></svg></div>
  <div id="range"><svg style="position:absolute;left:12px;top:13px" width="14" height="14" viewBox="0 0 14 14" fill="none" stroke="#c0c4cc" stroke-width="1.200"><circle cx="7" cy="7" r="6"/><path d="M7 3.500V7l2.300 1.300"/></svg><span style="left:77px">开始日期</span><span style="left:184px;color:#303133">至</span><span style="left:252px">结束日期</span></div>
  <div class="btn" style="left:1076px;width:86px;background:#67c23a;padding-left:18px"><svg style="position:absolute;left:21px;top:13px" width="14" height="14" viewBox="0 0 14 14" fill="none" stroke="#fff" stroke-width="1.300"><circle cx="7" cy="7" r="6"/><path d="M5.600 4.500L9.500 7 5.600 9.500z" stroke-linejoin="round"/></svg>开始</div>
  <div class="btn" style="left:1180px;width:87px;background:#f56c6c;padding-left:18px"><svg style="position:absolute;left:21px;top:13px" width="14" height="14" viewBox="0 0 14 14" fill="none" stroke="#fff" stroke-width="1.400" stroke-linecap="round"><path d="M4.200 3A5.500 5.500 0 1 0 9.800 3M7 1v5.500"/></svg>停止</div>
  <div class="btn" style="left:1283px;width:87px;background:#e6a23c;padding-left:18px"><svg style="position:absolute;left:21px;top:13px" width="14" height="14" viewBox="0 0 14 14" fill="none" stroke="#fff" stroke-width="1.300"><circle cx="7" cy="7" r="6"/><circle cx="7" cy="7" r="2.300"/></svg>继续</div>
  <div id="bline"></div>
</div>
</body>
</html>
